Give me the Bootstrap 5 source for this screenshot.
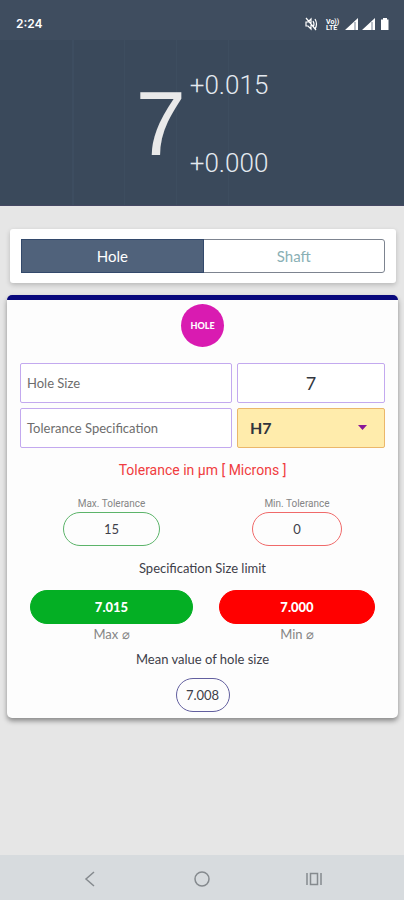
<!DOCTYPE html>
<html lang="en">
<head>
<meta charset="utf-8">
<meta name="viewport" content="width=device-width, initial-scale=1">
<title>Hole and shaft tolerance</title>
<link href="https://cdn.jsdelivr.net/npm/bootstrap@5.3.0/dist/css/bootstrap.min.css" rel="stylesheet">
<style>
body { font-family: Lato, sans-serif; background: #e6e6e6; color: #3d4049; font-size: 13px; line-height: 20px; }
.top-panel { background: #3a495b; color: #e4e9f0; }
.status { background: #3f4d5f; height: 40px; padding: 6px 14px 0 16px; font: 600 12px/20px Inter, sans-serif; color: #fff; }
.readout { height: 166px; padding-top: 2px; border-bottom: 1px solid #454863;
  background: linear-gradient(90deg, transparent 72px, #3d4d60 72px 74px, transparent 74px 124px, #3d4d5f 124px 125px, transparent 125px 176px, #3d4d5f 176px 177px, transparent 177px 228px, #3d4d5f 228px 229px, transparent 229px); }
.nominal { font: 90px/100px "Liberation Sans", sans-serif; color: #e9e9e9; margin-right: 4px; }
.limits { font: 300 26px/30px Roboto, sans-serif; gap: 48px; }
.tabs-card { margin: 23px 8px 0 10px; padding: 10px 11px; background: #fff; border-radius: 3px; box-shadow: 0 2px 5px #0003; }
.tab-btn { height: 34px; padding: 0; border: 1px solid #7d8490; border-radius: 3px; font-size: 15px; line-height: 20px; color: #8ab0b5; background: #fff; }
.tab-btn.active { background: #50627b; color: #fff; border-color: #33496b; border-radius: 0; }
.main-card { margin: 12px 6px 0 7px; padding: 4px 13px 6px; background: #fdfdfd; border-top: 5px solid #08087c; border-radius: 5px; box-shadow: 0 3px 5px #0006; }
.kind { width: 43px; height: 43px; background: #d91bb1; color: #fff; font-size: 9px; font-weight: 900; }
.fields { display: grid; grid-template-columns: 212fr 148fr; gap: 5px; margin-top: 16px; }
.cell { height: 40px; border: 1px solid #c3a9ef; border-radius: 2px; background: #fff; box-shadow: none; }
.cell-label { padding: 0 6px; color: #6d6d6d; }
.cell-input { width: 100%; min-width: 0; text-align: center; font-size: 18px; color: #33363e; padding: 0; }
.picker { position: relative; }
.cell-select { width: 100%; appearance: none; background: #ffecac; border-color: #ebb76b; padding: 0 12px; font-size: 16px; font-weight: 700; color: #30343d; }
.caret { position: absolute; right: 18px; top: 17px; pointer-events: none; }
.unit-title { font: 14px/20px Roboto, sans-serif; color: #f03c40; margin: 12px 0 0; }
.pair { display: grid; grid-template-columns: 183fr 176fr; column-gap: 6px; }
.mini { font: 10px/16px Roboto, sans-serif; color: #858585; }
.pill { height: 34px; border: 1px solid; border-radius: 17px; display: flex; align-items: center; justify-content: center; }
.pill-max { width: 53%; }
.pill-min { width: 51%; }
.pill-wide { width: 89%; color: #fff; font-weight: 900; }
.pill-mean { width: 54px; border-color: #625f9f; }
.max-line { border-color: #5cb46a; }
.min-line { border-color: #f06a6a; }
.max-fill { background: #04af24; border-color: #04af24; }
.min-fill { background: #f00; border-color: #f00; }
.soft { color: #858585; }
.caption { margin: 12px 0; }
.mean-label { margin: 5px 0 9px; }
.nav-keys { height: 45px; padding: 0 34px; background: #d7dbde; }
.nav-keys button { color: #858a8e; }
</style>
</head>
<body class="d-flex flex-column min-vh-100">
<header class="top-panel">
  <div class="status d-flex justify-content-between">
    <span class="pt-2">2:24</span>
    <svg class="mt-2" width="86" height="20" viewBox="304 14 86 20" fill="#fff" aria-hidden="true">
      <path d="M306 22h2l3-3v10l-3-3h-2z M313 21q2 3 0 6M315 19q3 5 0 10M306 18l10 12" fill="none" stroke="#fff" stroke-width="1.2"/>
      <text x="326" y="23.500" font-family="Roboto" font-size="7" font-weight="700">Vo))</text>
      <text x="326" y="30" font-family="Roboto" font-size="7" font-weight="700">LTE</text>
      <path d="M345 30L358 18V30z M362 30L375 18V30z"/>
      <path d="M355 22v8M372 22v8" stroke="#8c96a3" stroke-width="1.200"/>
      <path d="M383 18h4v1.500h1.500V30h-7.500V19.500h2z"/>
    </svg>
  </div>
  <div class="readout d-flex justify-content-center align-items-center">
    <div class="nominal">7</div>
    <div class="limits d-flex flex-column"><span>+0.015</span><span>+0.000</span></div>
  </div>
</header>
<main>
  <div class="tabs-card">
    <div class="btn-group d-flex" role="group" aria-label="Part type">
      <button type="button" class="btn tab-btn w-50 active">Hole</button>
      <button type="button" class="btn tab-btn w-50">Shaft</button>
    </div>
  </div>
  <section class="main-card text-center">
    <div class="kind rounded-circle d-flex align-items-center justify-content-center mx-auto">HOLE</div>
    <div class="fields">
      <label class="cell cell-label d-flex align-items-center" for="size">Hole Size</label>
      <input class="cell cell-input" id="size" type="text" inputmode="decimal" value="7">
      <label class="cell cell-label d-flex align-items-center" for="spec">Tolerance Specification</label>
      <div class="picker">
        <select class="cell cell-select" id="spec"><option>H7</option></select>
        <svg class="caret" width="9" height="5" viewBox="0 0 9 5" aria-hidden="true"><path d="M0 0h9L4.500 5z" fill="#8a1799"/></svg>
      </div>
    </div>
    <h2 class="unit-title">Tolerance in µm [ Microns ]</h2>
    <div class="pair mt-3">
      <div class="d-flex flex-column align-items-center"><label class="mini" for="maxTol">Max. Tolerance</label><output class="pill pill-max max-line" id="maxTol">15</output></div>
      <div class="d-flex flex-column align-items-center"><label class="mini" for="minTol">Min. Tolerance</label><output class="pill pill-min min-line" id="minTol">0</output></div>
    </div>
    <p class="caption">Specification Size limit</p>
    <div class="pair">
      <div class="d-flex flex-column align-items-center"><output class="pill pill-wide max-fill" id="maxSize">7.015</output><label class="soft" for="maxSize">Max ⌀</label></div>
      <div class="d-flex flex-column align-items-center"><output class="pill pill-wide min-fill" id="minSize">7.000</output><label class="soft" for="minSize">Min ⌀</label></div>
    </div>
    <label class="d-block mean-label" for="mean">Mean value of hole size</label>
    <output class="pill pill-mean mx-auto" id="mean">7.008</output>
  </section>
</main>
<nav class="nav-keys mt-auto d-flex justify-content-around align-items-center" aria-label="System">
  <button class="btn border-0 p-0" type="button" aria-label="Back"><svg width="16" height="16" viewBox="0 0 16 16" fill="none" stroke="currentColor" stroke-width="1.500"><path d="M12 1L4 8l8 7"/></svg></button>
  <button class="btn border-0 p-0" type="button" aria-label="Home"><svg width="16" height="16" viewBox="0 0 16 16" fill="none" stroke="currentColor" stroke-width="1.500"><circle cx="8" cy="8" r="7"/></svg></button>
  <button class="btn border-0 p-0" type="button" aria-label="Recent apps"><svg width="16" height="16" viewBox="0 0 16 16" fill="none" stroke="currentColor" stroke-width="1.500"><path d="M1 2v12M15 2v12M4.500 2.500h7v11h-7z"/></svg></button>
</nav>
<script src="https://cdn.jsdelivr.net/npm/bootstrap@5.3.0/dist/js/bootstrap.bundle.min.js"></script>
</body>
</html>
